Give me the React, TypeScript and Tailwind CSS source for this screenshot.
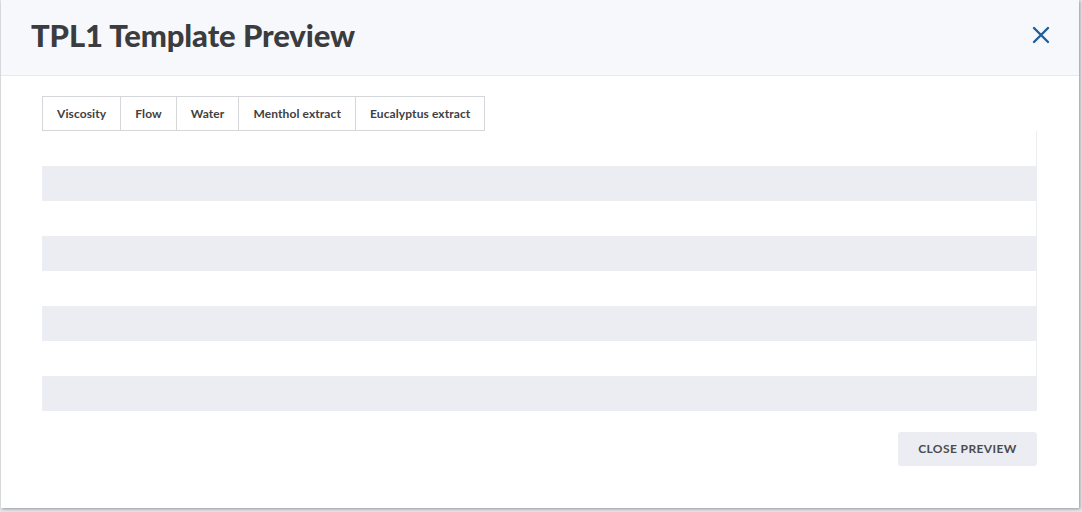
export default function App() {
  const tabs = ["Viscosity", "Flow", "Water", "Menthol extract", "Eucalyptus extract"];
  const rows = [0, 1, 2, 3, 4, 5, 6, 7];
  return (
    <div className="w-[1082px] h-[512px] bg-[#e5e6ea] overflow-hidden" style={{ fontFamily: "Lato, 'Open Sans', sans-serif" }}>
      <div className="w-[1078px] h-[508px] ml-[1px] bg-white shadow-[1px_1px_3px_rgba(0,0,0,0.35)] flex flex-col">
        <div className="h-[76px] bg-[#f7f8fb] border-b border-[#e8e9ee] flex items-center justify-between pl-[30px] pr-[28px]">
          <h1 className="text-[31px] font-black text-[#3b3c3e] tracking-[-0.1px] mt-[-4px]">TPL1 Template Preview</h1>
          <svg width="20" height="20" viewBox="0 0 20 20" className="mt-[-6px]">
            <path d="M3 3L17 17M17 3L3 17" stroke="#1f5f9b" strokeWidth="2.4" strokeLinecap="round" />
          </svg>
        </div>
        <div className="pl-[41px] pr-[42px] pt-[20px] flex flex-col">
          <div className="flex">
            <div className="flex border border-[#d5d6da]">
              {tabs.map((t, i) => (
                <div key={t} className={`h-[33px] flex items-center px-[14px] text-[12px] font-bold text-[#3f4042] tracking-[0.1px] ${i > 0 ? "border-l border-[#d5d6da]" : ""}`}>{t}</div>
              ))}
            </div>
          </div>
          <div className="border-r border-[#ecedf1]">
            {rows.map((r) => (
              <div key={r} className={`h-[35px] ${r % 2 ? "bg-[#ecedf2]" : "bg-white"}`} />
            ))}
          </div>
          <div className="flex justify-end mt-[21px]">
            <button className="w-[139px] h-[34px] rounded-[3px] bg-[#ecedf2] text-[12px] font-bold text-[#4a4b4d] tracking-[0.4px]">CLOSE PREVIEW</button>
          </div>
        </div>
      </div>
    </div>
  );
}
